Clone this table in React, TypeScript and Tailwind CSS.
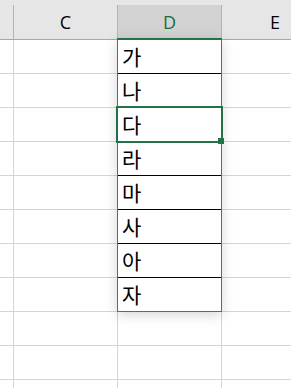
import React from "react";

const items = ["가", "나", "다", "라", "마", "사", "아", "자"];
const rowCount = 11;

export default function App() {
  return (
    <div
      className="relative w-[291px] h-[388px] overflow-hidden bg-white"
      style={{ fontFamily: '"Open Sans", "Noto Sans", sans-serif' }}
    >
      {/* column headers */}
      <div className="flex h-[40px] bg-[#e6e6e6] pt-[5px] border-b border-[#a6a6a6]">
        <div className="w-[14px] shrink-0 border-r border-[#b4b4b4]" />
        <div className="w-[104px] shrink-0 border-r border-[#b4b4b4] flex items-center justify-center text-[18px] text-black">
          C
        </div>
        <div className="w-[104px] shrink-0 border-r border-[#b4b4b4] bg-[#d2d2d2] flex items-center justify-center text-[18px] text-[#1e6b41]">
          D
        </div>
        <div className="flex-1 flex items-center justify-start pl-[48px] text-[18px] text-black">
          E
        </div>
      </div>

      {/* grid */}
      <div className="flex flex-col">
        {Array.from({ length: rowCount }).map((_, i) => (
          <div key={i} className="flex h-[34px] shrink-0 border-b border-[#d4d4d4]">
            <div className="w-[14px] shrink-0 border-r border-[#d4d4d4]" />
            <div className="w-[104px] shrink-0 border-r border-[#d4d4d4]" />
            <div className="w-[104px] shrink-0 border-r border-[#d4d4d4]" />
            <div className="flex-1" />
          </div>
        ))}
      </div>

      {/* list of values in column D */}
      <div className="absolute left-[117px] top-[38px] w-[105px] flex flex-col border-t-2 border-t-[#217346] border-x border-b border-x-[#3a6cc4] border-b-[#3a6cc4] bg-white shadow-[0_3px_12px_rgba(0,0,0,0.16)]">
        {items.map((t, i) => (
          <div
            key={t}
            className={
              i < items.length - 1
                ? "h-[34px] border-b border-black flex items-center pl-[4px]"
                : "h-[33px] flex items-center pl-[4px]"
            }
          >
            <span
              className="text-[21px] leading-none text-black"
              style={{ fontFamily: '"Noto Sans CJK KR", "Noto Sans", sans-serif' }}
            >
              {t}
            </span>
          </div>
        ))}
      </div>

      {/* active cell frame and fill handle */}
      <div className="absolute left-[116px] top-[106px] w-[107px] h-[37px] border-2 border-[#217346]" />
      <div className="absolute left-[218px] top-[138px] w-[6px] h-[6px] bg-[#217346]" />
    </div>
  );
}
